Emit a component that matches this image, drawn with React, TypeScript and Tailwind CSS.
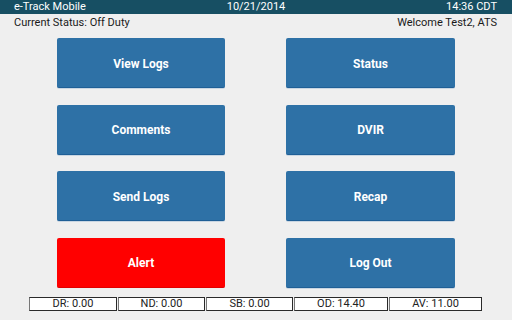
import React from "react";

const font = { fontFamily: "Roboto, 'Liberation Sans', sans-serif" };

function Btn({ label, red }: { label: string; red?: boolean }) {
  return (
    <div
      className={
        "h-[50px] rounded-[2px] flex items-center justify-center text-white font-bold text-[12px] pt-[2px] " +
        (red
          ? "bg-[#ff0000] border-b border-[#e00000]"
          : "bg-[#2e71a6] border-b border-[#1f5f96] shadow-[0_1px_0_#c9d6e2]")
      }
    >
      {label}
    </div>
  );
}

export default function App() {
  const boxes: [string, string][] = [
    ["DR: 0.00", "w-[88px]"],
    ["ND: 0.00", "w-[87px]"],
    ["SB: 0.00", "w-[87px]"],
    ["OD: 14.40", "w-[94px]"],
    ["AV: 11.00", "w-[93px]"],
  ];
  return (
    <div className="w-[512px] h-[320px] bg-[#efefef] flex flex-col overflow-hidden" style={font}>
      <div className="h-[14px] bg-[#174f63] text-white text-[11px] leading-[14px] px-[14px] grid grid-cols-3">
        <span>e-Track Mobile</span>
        <span className="text-center">10/21/2014</span>
        <span className="text-right pr-[1px]">14:36 CDT</span>
      </div>
      <div className="h-[17px] flex justify-between items-center px-[14px] text-[11px] text-[#1a1a1a] pr-[15px] pt-[1px]">
        <span>Current Status: Off Duty</span>
        <span>Welcome Test2, ATS</span>
      </div>
      <div className="mt-[7px] grid grid-cols-[168px_169px] gap-x-[61px] gap-y-[16.67px] pl-[57px]">
        <Btn label="View Logs" />
        <Btn label="Status" />
        <Btn label="Comments" />
        <Btn label="DVIR" />
        <Btn label="Send Logs" />
        <Btn label="Recap" />
        <Btn label="Alert" red />
        <Btn label="Log Out" />
      </div>
      <div className="mt-[9px] flex gap-[1px] pl-[29px]">
        {boxes.map(([t, w]) => (
          <div
            key={t}
            className={
              w +
              " h-[14px] bg-white border border-[#2a2a2a] border-l-[#777] flex items-center justify-center text-[11px] leading-none text-[#222]"
            }
          >
            {t}
          </div>
        ))}
      </div>
    </div>
  );
}
